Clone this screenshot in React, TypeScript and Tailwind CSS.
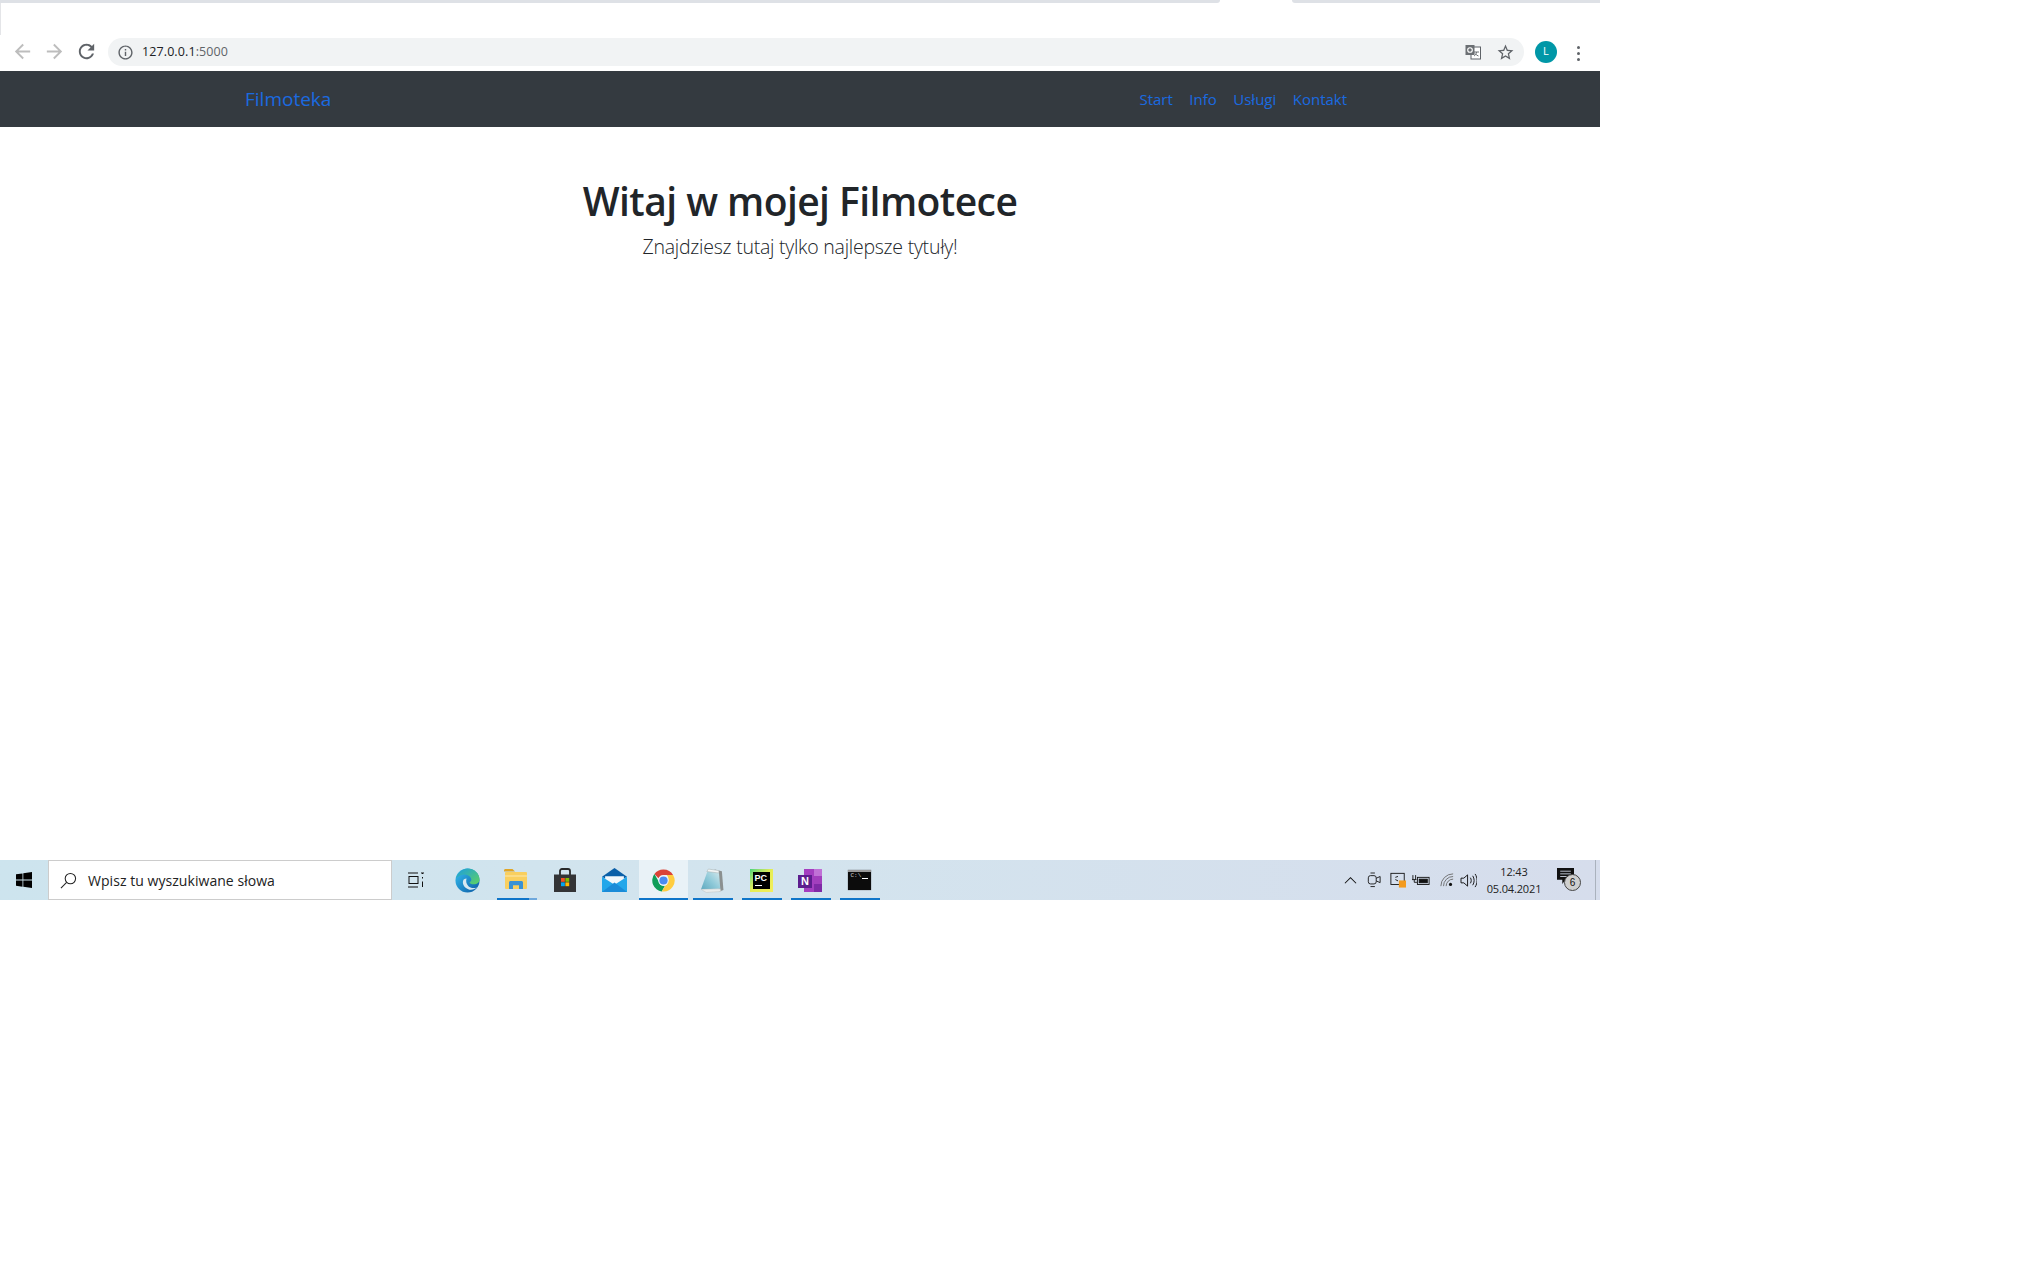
import React from "react";

const seg = "font-['Open_Sans','Noto_Sans',sans-serif]";

function Mi({ d, className }: { d: string; className: string }) {
  return (
    <svg viewBox="0 0 24 24" className={className} fill="currentColor">
      <path d={d} />
    </svg>
  );
}

function Edge() {
  return (
    <svg viewBox="0 0 26 26" className="w-[25px] h-[25px]">
      <defs>
        <linearGradient id="eg1" x1="0" y1="0" x2="1" y2="1">
          <stop offset="0" stopColor="#35c1f1" />
          <stop offset="1" stopColor="#0c59a4" />
        </linearGradient>
        <linearGradient id="eg2" x1="0" y1="0" x2="1" y2="1">
          <stop offset="0" stopColor="#1b9de2" />
          <stop offset="1" stopColor="#5fd35f" />
        </linearGradient>
      </defs>
      <circle cx="13" cy="13" r="12.5" fill="url(#eg1)" />
      <path d="M1 11C3 4 8 .5 13 .5c7 0 12.500 5 12.500 11.500 0 3-2.500 5-6 5-2.500 0-4-1-4.500-2 2-1 2.500-2.500 1.500-4.500C15 7 11 6 7.500 7 4.500 8 2 9.500 1 11z" fill="url(#eg2)" />
      <path d="M9 12c-2 3-.5 9 6 10.500 3 .5 6-.5 8-2.500-3 1.500-7 1-9-1-2-2-3-5-2-8-1 0-2 .2-3 1z" fill="#d7e8f0" />
    </svg>
  );
}

function Folder() {
  return (
    <svg viewBox="0 0 24 24" className="w-[24px] h-[24px]">
      <path d="M0 2.500C0 1.700.6 1 1.500 1h7l2.500 2.500H0z" fill="#e0a526" />
      <rect x="0" y="4" width="22" height="17" rx="1" fill="#f9cf5f" transform="translate(1 0)" />
      <path d="M1 7h22v2H1z" fill="#fbdc86" />
      <path d="M5 21v-6.500C5 13.700 5.700 13 6.500 13h11c.8 0 1.500.7 1.500 1.500V21h-4v-3.500H9V21z" fill="#3a92d4" />
      <rect x="9" y="17.500" width="6" height="3.500" fill="#f9cf5f" />
    </svg>
  );
}

function Store() {
  return (
    <svg viewBox="0 0 24 24" className="w-[24px] h-[24px]">
      <path d="M7 7V3c0-1 .8-2 2-2h6c1.200 0 2 1 2 2v4" fill="none" stroke="#2a2a2a" strokeWidth="1.800" />
      <path d="M1 6.500h22V24H1z" fill="#333436" />
      <rect x="8" y="10" width="3.800" height="3.800" fill="#f25022" />
      <rect x="12.400" y="10" width="3.800" height="3.800" fill="#7fba00" />
      <rect x="8" y="14.400" width="3.800" height="3.800" fill="#00a4ef" />
      <rect x="12.400" y="14.400" width="3.800" height="3.800" fill="#ffb900" />
    </svg>
  );
}

function Mail() {
  return (
    <svg viewBox="0 0 24 24" className="w-[25px] h-[25px]">
      <path d="M0 8.500 12 0l12 8.500-12 7z" fill="#0a5fa8" />
      <path d="M3 8h18v7l-9 5-9-5z" fill="#f2f7fb" />
      <path d="M0 8.500 12 16l12-7.500V23H0z" fill="#23a7ea" />
      <path d="M0 23 12 14l12 9z" fill="#1a8bd8" />
    </svg>
  );
}

function Chrome() {
  return (
    <svg viewBox="0 0 24 24" className="w-[23px] h-[23px]">
      <path d="M12 .5a11.500 11.500 0 0 1 10 5.750H12a5.750 5.750 0 0 0-5.300 3.500L2.500 5.200A11.500 11.500 0 0 1 12 .5z" fill="#db4437" />
      <path d="M2.500 5.200 6.700 12.500a5.750 5.750 0 0 0 6.800 5.100l-3.300 5.800A11.500 11.500 0 0 1 2.500 5.200z" fill="#0f9d58" />
      <path d="M22 6.250A11.500 11.500 0 0 1 10.200 23.400l5-8.400a5.750 5.750 0 0 0 0-8.750z" fill="#ffcd40" />
      <circle cx="12" cy="12" r="5.400" fill="#f1f6f9" />
      <circle cx="12" cy="12" r="4.300" fill="#4b8bf0" />
    </svg>
  );
}

function Notepad() {
  return (
    <svg viewBox="0 0 24 24" className="w-[25px] h-[25px]">
      <defs>
        <linearGradient id="np" x1="1" y1="0" x2="0" y2="1">
          <stop offset="0" stopColor="#dcecef" />
          <stop offset="0.55" stopColor="#8ec9d8" />
          <stop offset="1" stopColor="#5fa9bf" />
        </linearGradient>
      </defs>
      <path d="M14 1.500 21 3l1.500 18-4 1.500z" fill="#8b9090" />
      <path d="M8 1 18 2.500 19.500 20 1 20.500z" fill="url(#np)" />
      <path d="M8 1 18 2.500 18.200 4.800 6.600 3.400z" fill="#f2f5f5" stroke="#9aa3a3" strokeWidth=".4" />
      <path d="M1 20.500 19.500 20 20 22.500 6 23.500z" fill="#e9eded" stroke="#b5bbbb" strokeWidth=".4" />
    </svg>
  );
}

function PyCharm() {
  return (
    <div className="w-[23px] h-[23px] bg-gradient-to-br from-[#3fd27a] via-[#e6ee55] to-[#f4ee5c] p-[3px]">
      <div className="w-full h-full bg-black flex flex-col pl-[2px] pt-[1px]">
        <span className="font-['Liberation_Sans',sans-serif] text-[9px] leading-[10px] font-bold text-white tracking-[0px]">PC</span>
        <span className="block w-[7px] h-[1px] bg-white mt-[2px]"></span>
      </div>
    </div>
  );
}

function OneNote() {
  return (
    <div className="relative w-[24px] h-[23px]">
      <div className="absolute right-0 top-0 w-[18px] h-[23px] bg-[#a43ec0] flex flex-col">
        <div className="flex-1 ml-[10px] bg-[#c071d6]"></div>
        <div className="flex-1 ml-[10px] bg-[#a23fbd]"></div>
        <div className="flex-1 ml-[10px] bg-[#7f2aa6]"></div>
      </div>
      <div className="absolute left-0 top-[6px] w-[14px] h-[13px] bg-[#5c1d8e] flex items-center justify-center font-['Liberation_Sans',sans-serif] text-[11px] leading-[13px] font-bold text-white">N</div>
    </div>
  );
}

function Term() {
  return (
    <div className="w-[23px] h-[20px] bg-[#0c0c0c] shadow-[0_0_1px_#555] flex flex-col">
      <div className="h-[2px] bg-[#9a9a9a]"></div>
      <div className="flex items-start pl-[3px]">
        <span className="font-['Liberation_Mono',monospace] text-[6px] leading-[8px] text-[#cfcfcf]">C:\</span>
        <span className="w-[6px] h-[1px] bg-white mt-[6px] ml-[1px]"></span>
      </div>
    </div>
  );
}

type Tb = { icon: React.ReactNode; bar?: "full" | "dual"; active?: boolean };
const apps: Tb[] = [
  { icon: <Edge /> },
  { icon: <Folder />, bar: "dual" },
  { icon: <Store /> },
  { icon: <Mail /> },
  { icon: <Chrome />, bar: "full", active: true },
  { icon: <Notepad />, bar: "full" },
  { icon: <PyCharm />, bar: "full" },
  { icon: <OneNote />, bar: "full" },
  { icon: <Term />, bar: "full" },
];

function TaskButton({ icon, bar, active }: Tb) {
  return (
    <div className={`relative w-[49px] h-full flex items-center justify-center pr-[1px] ${active ? "bg-[#e9f2f7]" : ""}`}>
      {icon}
      {bar === "dual" && (
        <div className="absolute bottom-0 left-[5px] w-[40px] h-[2px] flex">
          <div className="flex-1 bg-[#0f75c9]"></div>
          <div className="w-[8px] bg-[#6ea8dc]"></div>
        </div>
      )}
      {bar === "full" && (
        <div className={`absolute bottom-0 h-[2px] bg-[#0f75c9] ${active ? "left-0 right-0" : "left-[5px] w-[40px]"}`}></div>
      )}
    </div>
  );
}

export default function App() {
  return (
    <div className="w-[2034px] h-[1262px] bg-white overflow-hidden">
      <div className="w-[1600px]">
        {/* tab strip */}
        <div className="h-[3px] flex">
          <div className="w-[1220px] bg-[#dee1e6] rounded-br-[3px]"></div>
          <div className="w-[72px]"></div>
          <div className="flex-1 bg-[#dee1e6] rounded-bl-[3px]"></div>
        </div>
        <div className="h-[32px] border-l border-[#e4e5e8] bg-white"></div>
        {/* toolbar */}
        <div className="h-[36px] flex items-start relative">
          <div className="w-[108px] h-[31px] flex items-center pl-[11px] gap-[9px] mt-[1px]">
            <Mi className="w-[23px] h-[23px] text-[#bdbdbd]" d="M20 11H7.830l5.590-5.590L12 4l-8 8 8 8 1.410-1.410L7.830 13H20v-2z" />
            <Mi className="w-[23px] h-[23px] text-[#bdbdbd]" d="M12 4l-1.410 1.410L16.170 11H4v2h12.170l-5.580 5.590L12 20l8-8z" />
            <Mi className="w-[23px] h-[23px] text-[#5f6368]" d="M17.650 6.350C16.200 4.900 14.210 4 12 4c-4.420 0-7.990 3.580-7.990 8s3.570 8 7.990 8c3.730 0 6.840-2.550 7.730-6h-2.080c-.82 2.330-3.040 4-5.650 4-3.310 0-6-2.690-6-6s2.690-6 6-6c1.660 0 3.140.69 4.220 1.780L13 11h7V4l-2.350 2.350z" />
          </div>
          <div className="mt-[3px] w-[1416px] h-[28px] rounded-full bg-[#f1f3f4] flex items-center pl-[9px] pr-[9px]">
            <Mi className="w-[17px] h-[17px] text-[#5f6368]" d="M11 7h2v2h-2zm0 4h2v6h-2zm1-9C6.480 2 2 6.480 2 12s4.480 10 10 10 10-4.480 10-10S17.520 2 12 2zm0 18c-4.410 0-8-3.590-8-8s3.590-8 8-8 8 3.590 8 8-3.590 8-8 8z" />
            <span className={`ml-[8px] ${seg} text-[12.500px] leading-[18px] tracking-[0.1px] text-[#202124]`}>
              127.0.0.1<span className="text-[#5f6368]">:5000</span>
            </span>
            <div className="flex-1"></div>
            <svg viewBox="0 0 16 16" className="w-[16px] h-[16px] mr-[15px]">
              <rect x="6" y="3" width="9.500" height="12" fill="#fff" stroke="#5f6368" />
              <rect x="0.500" y="1" width="9" height="10" fill="#6b6f73" />
              <circle cx="5" cy="6" r="2.300" fill="none" stroke="#fff" strokeWidth="1.100" />
              <path d="M9 8h5M11.500 8c0 2-1.500 3.500-2.500 4M10 9.500c.8 1.200 2 2 3.500 2.500" fill="none" stroke="#5f6368" strokeWidth=".9" />
            </svg>
            <Mi className="w-[19px] h-[19px] text-[#5f6368]" d="M22 9.240l-7.190-.62L12 2 9.190 8.630 2 9.240l5.460 4.730L5.820 21 12 17.270 18.180 21l-1.630-7.030L22 9.240zM12 15.400l-3.760 2.270 1-4.280-3.320-2.880 4.380-.38L12 6.100l1.710 4.040 4.380.38-3.320 2.880 1 4.280L12 15.400z" />
          </div>
          <div className="ml-[11px] mt-[6px] w-[22px] h-[22px] rounded-full bg-[#0097a7] flex items-center justify-center text-white text-[10px] leading-none font-['Liberation_Sans',sans-serif]">L</div>
          <div className="ml-[20px] mt-[11px] flex flex-col gap-[3px]">
            <span className="w-[3px] h-[3px] rounded-full bg-[#5f6368]"></span>
            <span className="w-[3px] h-[3px] rounded-full bg-[#5f6368]"></span>
            <span className="w-[3px] h-[3px] rounded-full bg-[#5f6368]"></span>
          </div>
        </div>

        {/* navbar */}
        <nav className={`h-[56px] bg-[#343a40] flex items-center pl-[245px] ${seg}`}>
          <span className="text-[19px] text-[#1a6ae0]">Filmoteka</span>
          <div className="ml-[808px] flex gap-[16.500px] text-[15px] text-[#1a6ae0]">
            <span>Start</span>
            <span>Info</span>
            <span>Usługi</span>
            <span>Kontakt</span>
          </div>
        </nav>

        {/* content */}
        <main className={`h-[733px] flex flex-col items-center pt-[50px] ${seg}`}>
          <h1 className="text-[39px] leading-[48px] font-semibold tracking-[-0.55px] text-[#212529]">Witaj w mojej Filmotece</h1>
          <p className="mt-[7px] text-[19.500px] leading-[30px] font-light tracking-[-0.25px] text-[#212529]">Znajdziesz tutaj tylko najlepsze tytuły!</p>
        </main>

        {/* taskbar */}
        <footer className={`h-[40px] flex bg-gradient-to-r from-[#cde4ee] via-[#d3e4ee] to-[#d6ddec] ${seg}`}>
          <div className="w-[48px] flex items-center justify-center">
            <svg viewBox="0 0 16 16" className="w-[16px] h-[16px]" fill="#000">
              <path d="M0 2.300 6.500 1.400v6.200H0zM7.300 1.300 16 0v7.600H7.300zM0 8.400h6.500v6.300L0 13.800zM7.300 8.400H16V16l-8.700-1.200z" />
            </svg>
          </div>
          <div className="w-[344px] h-full bg-white border border-[#cccccc] flex items-center pl-[11px]">
            <svg viewBox="0 0 18 18" className="w-[17px] h-[17px]" fill="none" stroke="#222" strokeWidth="1.100">
              <circle cx="11" cy="7" r="5.500" />
              <path d="M7 11 1 17" />
            </svg>
            <span className="ml-[11px] text-[14px] tracking-[0.05px] text-[#222]">Wpisz tu wyszukiwane słowa</span>
          </div>
          <div className="w-[49px] flex items-center justify-center pr-[2px]">
            <svg viewBox="0 0 16 16" className="w-[16px] h-[16px]" fill="none" stroke="#111" strokeWidth="1">
              <path d="M0 1h10M0 15h10" />
              <rect x="1" y="4.500" width="9" height="7" />
              <path d="M13 1h3M14.500 1v1M14.500 5v1.500M14.500 9.500V15" />
            </svg>
          </div>
          <div className="w-[2px]"></div>
          {apps.map((a, i) => (
            <TaskButton key={i} {...a} />
          ))}
          <div className="flex-1 flex items-center justify-end">
            <svg viewBox="0 0 14 8" className="w-[13px] h-[8px] mr-[10px]" fill="none" stroke="#111" strokeWidth="1.100">
              <path d="M1 7.500 7 1.500l6 6" />
            </svg>
            <svg viewBox="0 0 16 18" className="w-[14px] h-[18px] mr-[9px]" fill="none" stroke="#111" strokeWidth="1">
              <rect x="1.500" y="4" width="9" height="9.500" rx="2.500" />
              <path d="M10.500 7 15 5v7l-4.500-2M4 1h5M4 16.500h5" />
            </svg>
            <svg viewBox="0 0 18 18" className="w-[16px] h-[16px] mr-[6px]" fill="none" stroke="#111" strokeWidth="1">
              <rect x="1" y="1.500" width="15" height="12.500" />
              <path d="M6 6 9 5M9 10 6 8.500" />
              <rect x="10" y="9.500" width="8" height="8" fill="#f39a1e" stroke="none" />
            </svg>
            <svg viewBox="0 0 20 14" className="w-[18px] h-[13px] mr-[10px]" fill="none" stroke="#111" strokeWidth="1">
              <path d="M1 1v5M4 1v5M0 6h5M2.500 6v3h3" />
              <rect x="6" y="3.500" width="13" height="8" />
              <rect x="8" y="5.500" width="9" height="4" fill="#111" />
            </svg>
            <svg viewBox="0 0 16 16" className="w-[14px] h-[14px] mr-[6px]" fill="none" stroke="#666" strokeWidth="1">
              <path d="M1 15A14 14 0 0 1 15 1M4 15A11 11 0 0 1 15 4M7 15a8 8 0 0 1 8-8" />
              <circle cx="12" cy="13" r="1.800" fill="#111" stroke="none" />
            </svg>
            <svg viewBox="0 0 18 16" className="w-[17px] h-[15px]" fill="none" stroke="#111" strokeWidth="1">
              <path d="M1 5.500h3L8 2v12L4 10.500H1zM11 5c1.200 1.800 1.200 4.200 0 6M13.500 3c2 3 2 7 0 10M16 1c2.800 4 2.800 10 0 14" />
            </svg>
            <div className={`w-[70px] ml-[2px] pb-[1px] flex flex-col items-center text-[11px] leading-[17px] tracking-[-0.15px] text-[#222] ${seg}`}>
              <span>12:43</span>
              <span>05.04.2021</span>
            </div>
            <div className="relative w-[24px] h-[24px] ml-[8px] mr-[14px]">
              <svg viewBox="0 0 16 16" className="absolute left-0 top-0 w-[17px] h-[17px]" fill="#111">
                <path d="M0 0h16v11H8l-3 4v-4H0z" />
                <path d="M3 3h10M3 5.500h10M3 8h6" stroke="#d6deec" strokeWidth=".8" />
              </svg>
              <div className="absolute left-[7px] top-[6px] w-[17px] h-[17px] rounded-full bg-[#cfcfcf] border border-[#444] flex items-center justify-center text-[10px] leading-none text-[#111] font-['Liberation_Sans',sans-serif]">6</div>
            </div>
            <div className="w-[1px] h-full bg-[#aab2bd]"></div>
            <div className="w-[4px]"></div>
          </div>
        </footer>
      </div>
    </div>
  );
}
